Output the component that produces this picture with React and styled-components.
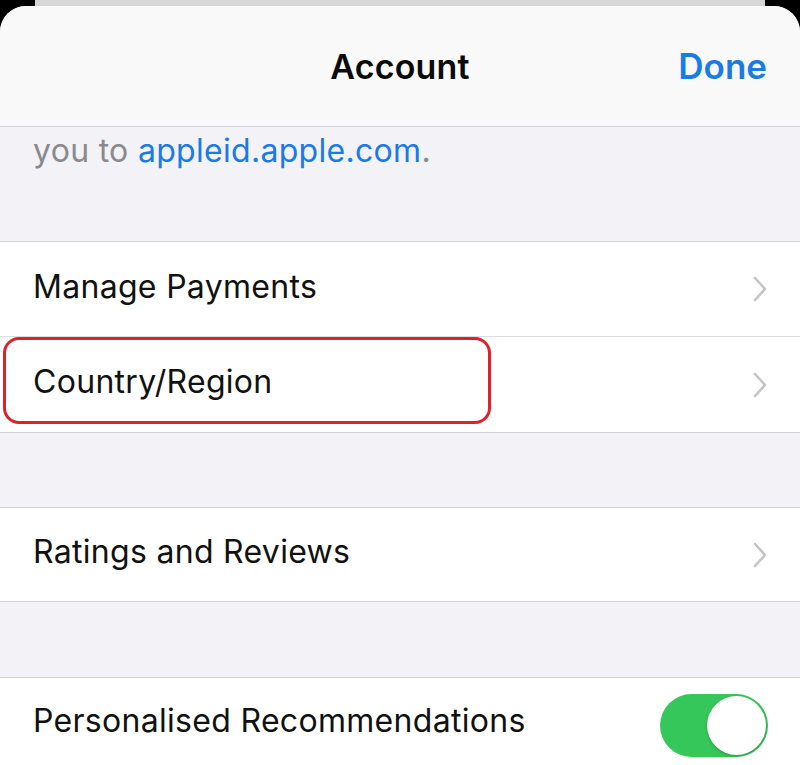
import React from 'react'
import styled, {createGlobalStyle} from 'styled-components'

const Global = createGlobalStyle`
html, body {
  margin: 0;
  padding: 0;
  background: #000;
}
* { box-sizing: border-box; }
`;

function Chevron() {
    return (
        <ChevronSvg viewBox="0 0 16 28" aria-hidden="true">
            <path d="M3 3 L13 14 L3 25" fill="none" stroke="#c4c4c7" strokeWidth="2.6" strokeLinecap="round" strokeLinejoin="round"/>
        </ChevronSvg>
    )
}

function App() {
    return (
        <Screen>
            <Global/>
            <BackCard/>
            <Sheet>
                <Header>
                    <Title>Account</Title>
                    <Done>Done</Done>
                </Header>
                <Note>
                    you to <Link>appleid.apple.com</Link>.
                </Note>
                <Group>
                    <Row>
                        <Label>Manage Payments</Label>
                        <Chevron/>
                    </Row>
                    <Row>
                        <Label>Country/Region</Label>
                        <Chevron/>
                        <Highlight/>
                    </Row>
                </Group>
                <Gap/>
                <Group>
                    <Row size="short">
                        <Label>Ratings and Reviews</Label>
                        <Chevron/>
                    </Row>
                </Group>
                <Gap tall/>
                <Group>
                    <Row size="last">
                        <Label>Personalised Recommendations</Label>
                        <Toggle><Knob/></Toggle>
                    </Row>
                </Group>
            </Sheet>
        </Screen>
    )
}

export default App

const Screen = styled.div`
width: 800px;
height: 765px;
overflow: hidden;
background: #000;
display: flex;
flex-direction: column;
align-items: center;
font-family: "Inter", "Liberation Sans", sans-serif;
`;

const BackCard = styled.div`
width: 730px;
height: 30px;
margin-bottom: -24px;
background: #d6d6d6;
border-radius: 0 0 6px 6px;
flex-shrink: 0;
`;

const Sheet = styled.div`
width: 800px;
flex: 1;
background: #f2f2f7;
border-radius: 26px 26px 0 0;
overflow: hidden;
`;

const Header = styled.div`
height: 121px;
background: #f9f9f9;
border-bottom: 1.5px solid #d2d2d6;
display: flex;
align-items: center;
justify-content: center;
position: relative;
`;

const Title = styled.div`
font-size: 34px;
font-weight: 600;
color: #0a0a0a;
letter-spacing: 0.2px;
`;

const Done = styled.div`
position: absolute;
right: 33px;
top: 50%;
transform: translateY(-50%);
font-size: 35px;
font-weight: 600;
color: #1a7ae6;
`;

const Note = styled.div`
height: 115px;
padding: 4px 33px 0;
font-size: 32px;
letter-spacing: 0.3px;
color: #8a8a8e;
border-bottom: 1.5px solid #d2d2d6;
`;

const Link = styled.span`
color: #1a7ae6;
`;

const Group = styled.div`
background: #fff;
border-bottom: 1.5px solid #d2d2d6;
`;

const Row = styled.div`
height: ${({size})=>size==="last"?"90px":size==="short"?"93px":"95px"};
display: flex;
align-items: center;
justify-content: space-between;
padding: 0 32px 6px 33px;
position: relative;
border-bottom: 1.5px solid #dcdcdf;
&:last-child { border-bottom: none; }
`;

const Label = styled.div`
font-size: 32px;
color: #111;
letter-spacing: 0.3px;
`;

const ChevronSvg = styled.svg`
width: 16px;
height: 28px;
margin-top: 6px;
`;

const Highlight = styled.div`
position: absolute;
left: 3px;
top: 0;
width: 488px;
height: 87px;
border: 3.5px solid #e0202a;
border-radius: 16px;
pointer-events: none;
`;

const Gap = styled.div`
height: ${({tall})=>tall?"76px":"75px"};
border-bottom: 1.5px solid #d2d2d6;
`;

const Toggle = styled.div`
width: 108px;
height: 63px;
border-radius: 32px;
background: #35c759;
position: relative;
margin-top: 10px;
`;

const Knob = styled.div`
position: absolute;
right: 2px;
top: 2px;
width: 59px;
height: 59px;
border-radius: 50%;
background: #fff;
box-shadow: 0 1px 3px rgba(0,0,0,0.25);
`;
